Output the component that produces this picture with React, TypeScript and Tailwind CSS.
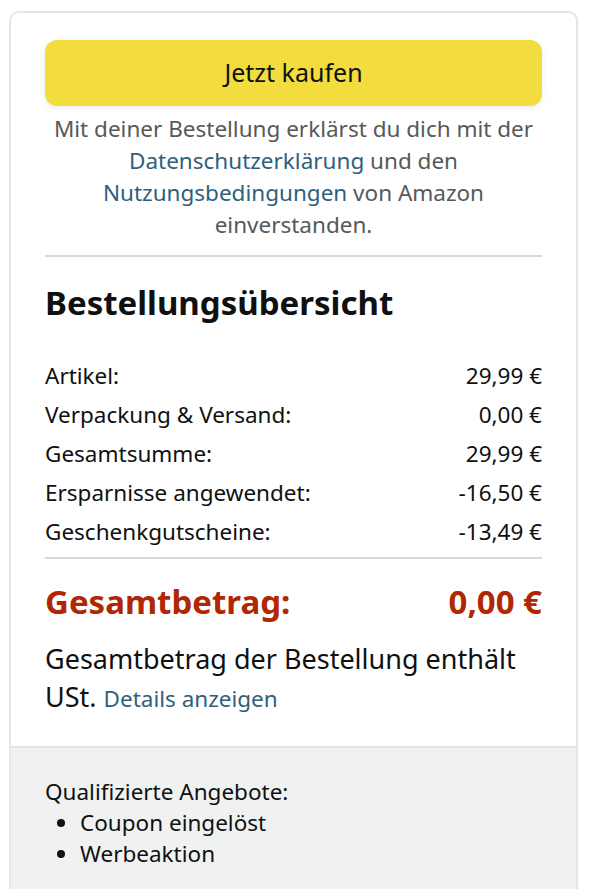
export default function App() {
  const rows = [
    { label: 'Artikel:', value: '29,99 €' },
    { label: 'Verpackung & Versand:', value: '0,00 €' },
    { label: 'Gesamtsumme:', value: '29,99 €' },
    { label: 'Ersparnisse angewendet:', value: '-16,50 €' },
    { label: 'Geschenkgutscheine:', value: '-13,49 €' },
  ]
  return (
    <div className="bg-white min-h-[889px] pt-[11px] pl-[9px] font-['Noto_Sans',sans-serif] text-[#0f1111]">
      <div className="w-[569px] rounded-t-[10px] border-2 border-b-0 border-[#e3e6e6] overflow-hidden">
        <div className="px-[34px] pt-[27px] pb-[28px]">
          <button className="w-full h-[66px] rounded-[12px] bg-[#f2dc3e] shadow-[0_2px_5px_rgba(213,217,217,0.5)] text-[25px] text-[#0f1111]">
            Jetzt kaufen
          </button>
          <p className="mt-[7px] text-center text-[22.5px] leading-[32px] text-[#565959]">
            Mit deiner Bestellung erklärst du dich mit der{' '}
            <span className="text-[#2f5f7d]">Datenschutzerklärung</span> und den{' '}
            <span className="text-[#2f5f7d]">Nutzungsbedingungen</span> von Amazon einverstanden.
          </p>
          <div className="mt-[14px] border-t-2 border-[#d5d9d9]" />
          <h2 className="mt-[26px] text-[33px] font-bold leading-[40px]">Bestellungsübersicht</h2>
          <div className="mt-[35px] flex flex-col gap-[4px]">
            {rows.map(r => (
              <div key={r.label} className="flex justify-between text-[22.5px] leading-[35px]">
                <span>{r.label}</span>
                <span>{r.value}</span>
              </div>
            ))}
          </div>
          <div className="mt-[8px] border-t-2 border-[#d5d9d9]" />
          <div className="mt-[23px] flex justify-between text-[33px] font-bold leading-[40px] text-[#b12704]">
            <span>Gesamtbetrag:</span>
            <span>0,00 €</span>
          </div>
          <p className="mt-[18px] text-[27px] leading-[38px]">
            Gesamtbetrag der Bestellung enthält USt.{' '}
            <span className="text-[22.5px] text-[#2f5f7d]">Details anzeigen</span>
          </p>
        </div>
        <div className="bg-[#f0f2f2] border-t-2 border-[#e3e6e6] px-[34px] pt-[28px] pb-[40px] text-[22.5px] leading-[31px]">
          <div>Qualifizierte Angebote:</div>
          <ul className="list-disc pl-[35px]">
            <li>Coupon eingelöst</li>
            <li>Werbeaktion</li>
          </ul>
        </div>
      </div>
    </div>
  )
}
